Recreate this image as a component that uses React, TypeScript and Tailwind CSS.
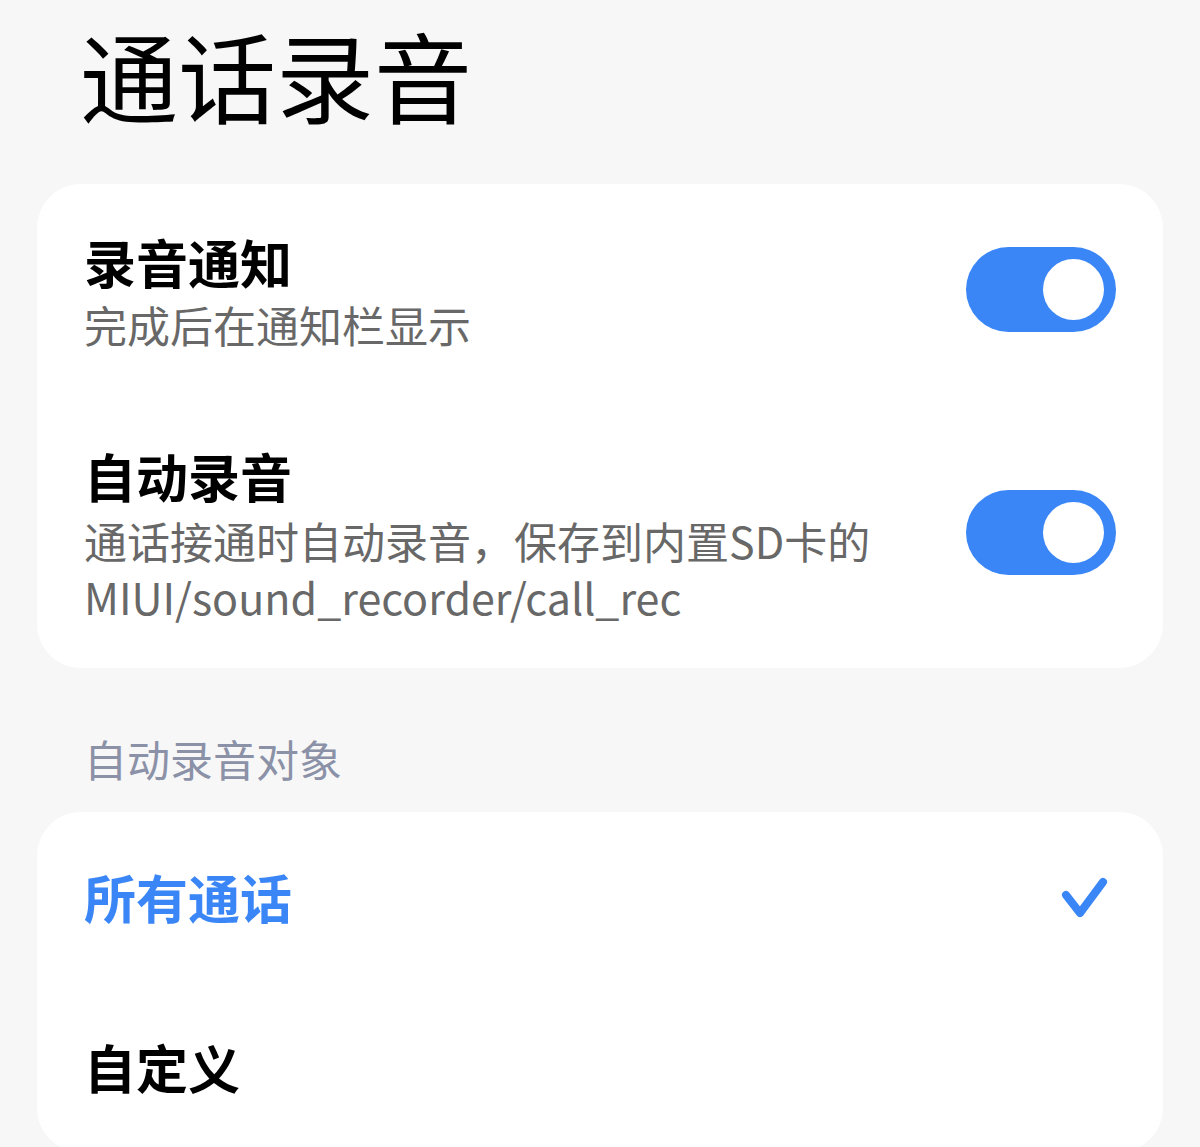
import React from "react";

function Toggle() {
  return (
    <div className="w-[150px] h-[85px] mb-[5px] rounded-full bg-[#3a86f7] flex items-center justify-end pr-[12px] shrink-0">
      <div className="w-[61px] h-[61px] rounded-full bg-white" />
    </div>
  );
}

export default function App() {
  return (
    <div className="min-h-screen bg-[#f7f7f7] font-['Noto_Sans_CJK_SC',sans-serif] overflow-hidden">
      <div className="h-[184px] pt-[24px] pl-[80px]">
        <h1 className="text-[98px] leading-none font-normal text-black">通话录音</h1>
      </div>

      <div className="mx-[37px] bg-white rounded-[44px] px-[47px] pt-[48px] pb-[44px]">
        <div className="flex items-center justify-between">
          <div>
            <div className="text-[52px] leading-[60px] font-bold text-black">录音通知</div>
            <div className="mt-[4px] text-[43px] leading-[56px] text-[#686868]">完成后在通知栏显示</div>
          </div>
          <Toggle />
        </div>
        <div className="mt-[94px] flex items-center justify-between">
          <div>
            <div className="text-[52px] leading-[60px] font-bold text-black">自动录音</div>
            <div className="mt-[6px] text-[43px] leading-[56px] text-[#686868]">
              通话接通时自动录音，保存到内置SD卡的
              <br />
              MIUI/sound_recorder/call_rec
            </div>
          </div>
          <Toggle />
        </div>
      </div>

      <div className="mt-[62px] pl-[84px] text-[43px] leading-[56px] text-[#8b91a7]">自动录音对象</div>

      <div className="mt-[26px] mx-[37px] bg-white rounded-[44px] pl-[47px] pr-[52px]">
        <div className="h-[170px] flex items-center justify-between">
          <div className="text-[52px] leading-[60px] font-bold text-[#3a86f7]">所有通话</div>
          <svg width="52" height="46" viewBox="0 0 52 46" fill="none">
            <path d="M7 21 L21 39 L44 8" stroke="#3a86f7" strokeWidth="8" strokeLinecap="round" strokeLinejoin="round" />
          </svg>
        </div>
        <div className="h-[170px] flex items-center">
          <div className="text-[52px] leading-[60px] font-bold text-black">自定义</div>
        </div>
      </div>
    </div>
  );
}
